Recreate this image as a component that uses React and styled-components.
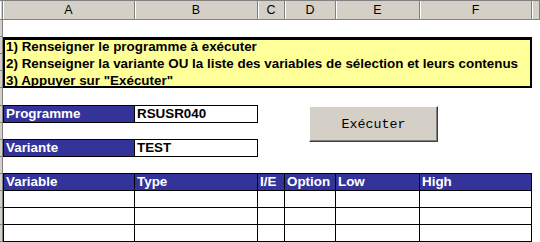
import React from 'react';
import styled, { createGlobalStyle } from 'styled-components';

const GlobalStyle = createGlobalStyle`
    html, body {
        margin: 0;
        padding: 0;
        background: #ffffff;
        overflow: hidden;
    }
`;

const Sheet = styled.div`
    position: relative;
    display: grid;
    grid-template-columns: 3px 132px 123px 27px 51px 84px 112px 8px;
    grid-template-rows: 20px repeat(4, 17px) 18px repeat(8, 17px);
    width: 540px;
    height: 242px;
    font-family: "Liberation Sans", Arial, sans-serif;
    font-size: 13.4px;
    background: #ffffff;
    overflow: hidden;
`;

const ColHeader = styled.div`
    grid-row: 1;
    box-sizing: border-box;
    background: #d4d0c8;
    border-top: 1px solid #808080;
    border-bottom: 1px solid #808080;
    border-right: 1px solid #808080;
    box-shadow: inset 1px 0 0 #ffffff;
    color: #000000;
    font-size: 12.5px;
    display: flex;
    align-items: center;
    justify-content: center;
    line-height: 1;
`;

const RowHeader = styled.div`
    grid-column: 1;
    grid-row: ${p => p.$row};
    box-sizing: border-box;
    background: #d4d0c8;
    border-right: 1px solid #808080;
    border-bottom: 1px solid #808080;
`;

const Instructions = styled.div`
    grid-column: 2 / 8;
    grid-row: 3 / 6;
    box-sizing: border-box;
    background: #ffff99;
    border: 2px solid #000000;
    border-top-width: 3px;
    display: flex;
    flex-direction: column;
    justify-content: center;
    padding-left: 1px;
    font-weight: bold;
`;

const Line = styled.div`
    height: 17px;
    line-height: 17px;
    white-space: nowrap;
`;

const Cell = styled.div`
    grid-column: ${p => p.$col};
    grid-row: ${p => p.$row};
    box-sizing: border-box;
    border-right: 1px solid #000000;
    border-bottom: 1px solid #000000;
    border-top: ${p => (p.$top ? '1px solid #000000' : 'none')};
    border-left: ${p => (p.$left ? '1px solid #000000' : 'none')};
    background: ${p => (p.$head ? '#333399' : '#ffffff')};
    color: ${p => (p.$head ? '#ffffff' : '#000000')};
    font-weight: bold;
    padding-left: 2px;
    line-height: 16px;
    white-space: nowrap;
    overflow: hidden;
    margin-top: ${p => (p.$top ? '-1px' : '0')};
    height: ${p => (p.$top ? '18px' : '17px')};
`;

const RunButton = styled.button`
    position: absolute;
    left: 309px;
    top: 106px;
    width: 129px;
    height: 36px;
    box-sizing: border-box;
    background: #d4d0c8;
    border: 1px solid;
    border-color: #ffffff #404040 #404040 #ffffff;
    box-shadow: inset -1px -1px 0 #808080;
    font-family: "Liberation Mono", "Courier New", monospace;
    font-size: 13.33px;
    color: #000000;
    padding: 0;
    cursor: default;
`;

const columns = ['A', 'B', 'C', 'D', 'E', 'F'];
const tableHead = ['Variable', 'Type', 'I/E', 'Option', 'Low', 'High'];

export default function App() {
    const rowNums = Array.from({ length: 13 }, (_, i) => i + 2);

    return (
        <>
            <GlobalStyle />
            <Sheet>
                <ColHeader style={{ gridColumn: 1 }} />
                {columns.map(c => <ColHeader key={c}>{c}</ColHeader>)}
                <ColHeader />

                {rowNums.map(r => <RowHeader key={r} $row={r} />)}

                <Instructions>
                    <Line>1) Renseigner le programme à exécuter</Line>
                    <Line>2) Renseigner la variante OU la liste des variables de sélection et leurs contenus</Line>
                    <Line>3) Appuyer sur "Exécuter"</Line>
                </Instructions>

                <Cell $col={2} $row={7} $top $left $head>Programme</Cell>
                <Cell $col={3} $row={7} $top>RSUSR040</Cell>
                <Cell $col={2} $row={9} $top $left $head>Variante</Cell>
                <Cell $col={3} $row={9} $top>TEST</Cell>

                {tableHead.map((h, i) => (
                    <Cell key={h} $col={i + 2} $row={11} $top $left={i === 0} $head>{h}</Cell>
                ))}
                {[12, 13, 14].map(r =>
                    tableHead.map((h, i) => (
                        <Cell key={r + h} $col={i + 2} $row={r} $left={i === 0} />
                    ))
                )}

                <RunButton type="button">Exécuter</RunButton>
            </Sheet>
        </>
    );
}
